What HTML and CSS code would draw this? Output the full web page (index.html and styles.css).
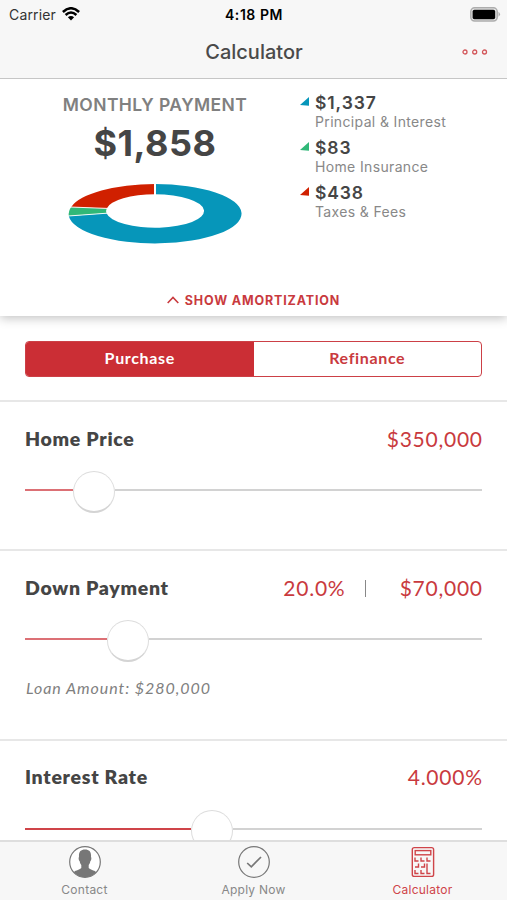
FILE: index.html
```html
<!DOCTYPE html>
<html lang="en">
<head>
<meta charset="utf-8">
<title>Calculator</title>
<link rel="stylesheet" href="styles.css">
</head>
<body>
<div class="app">
  <header class="top">
    <div class="status">
      <div class="carrier"><span>Carrier</span>
        <svg width="18" height="14" viewBox="0 0 18 14" fill="none" stroke="#000" stroke-width="2.5"><path d="M.9 5Q9-2.5 17.1 5"/><path d="M3.6 8Q9 3 14.4 8"/><path d="M9 13.4L5.9 10.3Q9 7.8 12.1 10.3Z" fill="#000" stroke="none"/></svg>
      </div>
      <div class="clock">4:18 PM</div>
      <svg class="battery" width="31" height="15" viewBox="0 0 31 15"><rect x=".8" y=".8" width="26.4" height="13.2" rx="3.8" fill="#e5e5e5" stroke="#adadad" stroke-width="1.5"/><rect x="2.6" y="2.7" width="22.6" height="9.5" rx="1.8" fill="#000"/><path d="M28.5 4.8Q31.5 7.3 28.5 9.8Z" fill="#adadad"/></svg>
    </div>
    <div class="nav">
      <h1>Calculator</h1>
      <svg class="more" width="26" height="6" viewBox="0 0 26 6" fill="none" stroke="#d3575b" stroke-width="1.3"><circle cx="3" cy="3" r="2"/><circle cx="12.7" cy="3" r="2"/><circle cx="22.5" cy="3" r="2"/></svg>
    </div>
  </header>

  <section class="summary">
    <div class="overview">
      <div class="payment">
        <div class="caption">MONTHLY PAYMENT</div>
        <div class="total">$1,858</div>
        <svg class="donut" width="174" height="60" viewBox="68 184 174 60">
          <path fill="#0696ba" d="M155 184A86.5 29.7 0 1 1 68.8 216L106.5 213.3A49 16.7 0 1 0 155 194.3Z"/>
          <path fill="#30b878" d="M68.8 216Q68.2 211 71.2 207L106.7 208.4Q105.5 211 106.5 213.3Z"/>
          <path fill="#d02000" d="M71.2 207A86.5 29.7 0 0 1 155 184V194.3A49 16.7 0 0 0 106.7 208.4Z"/>
          <path stroke="#fff" stroke-width="2" d="M155 183V196"/>
          <path stroke="#fff" stroke-width=".9" d="M67 216.1L107 213.2M67 206.9L107 208.4"/>
        </svg>
      </div>
      <ul class="legend">
        <li><svg width="9" height="9" viewBox="0 0 9 9"><path fill="#0696ba" d="M0 8L9 0V8.7Z"/></svg><div><b>$1,337</b><span>Principal &amp; Interest</span></div></li>
        <li><svg width="9" height="9" viewBox="0 0 9 9"><path fill="#30b878" d="M0 8L9 0V8.7Z"/></svg><div><b>$83</b><span>Home Insurance</span></div></li>
        <li><svg width="9" height="9" viewBox="0 0 9 9"><path fill="#d02000" d="M0 8L9 0V8.7Z"/></svg><div><b>$438</b><span>Taxes &amp; Fees</span></div></li>
      </ul>
    </div>
    <div class="amort"><svg width="12" height="8" viewBox="0 0 12 8" fill="none" stroke="#c93a3e" stroke-width="1.6"><path d="M.7 7L6 1.5L11.3 7"/></svg><span>SHOW AMORTIZATION</span></div>
  </section>

  <main class="form">
    <div class="segment"><div class="seg on">Purchase</div><div class="seg">Refinance</div></div>

    <section class="field price">
      <div class="row"><h2>Home Price</h2><div class="value">$350,000</div></div>
      <div class="slider"><div class="fill"></div><div class="knob"></div><div class="rest"></div></div>
    </section>

    <section class="field down">
      <div class="row"><h2>Down Payment</h2><div class="values"><div class="value">20.0%</div><i class="bar"></i><div class="value">$70,000</div></div></div>
      <div class="slider"><div class="fill"></div><div class="knob"></div><div class="rest"></div></div>
      <p class="note">Loan Amount: $280,000</p>
    </section>

    <section class="field rate">
      <div class="row"><h2>Interest Rate</h2><div class="value">4.000%</div></div>
      <div class="slider"><div class="fill"></div><div class="knob"></div><div class="rest"></div></div>
    </section>
  </main>

  <nav class="tabs">
    <div class="tab">
      <svg width="34" height="34" viewBox="0 0 34 34"><circle cx="17" cy="17" r="15.3" fill="#fff" stroke="#777" stroke-width="1.2"/><path fill="#777" d="M17 4.500C12.500 4.500 10.600 7 11 12C10.300 12.500 10.700 15.700 11.700 16.200C12 18 12.600 19 13.300 20V23C12 24.800 8 25 5.600 27.200A15.300 15.300 0 0 0 28.400 27.200C26 25 22 24.800 20.700 23V20C21.400 19 22 18 22.300 16.200C23.300 15.700 23.700 12.500 23 12C23.400 7 21.500 4.500 17 4.500Z"/></svg>
      <span>Contact</span>
    </div>
    <div class="tab">
      <svg width="34" height="34" viewBox="0 0 34 34" fill="none" stroke="#777"><circle cx="17" cy="17" r="15.300" stroke-width="1.200"/><path stroke-width="1.700" d="M10.200 18L14.300 21.800L24 12"/></svg>
      <span>Apply Now</span>
    </div>
    <div class="tab active">
      <svg width="34" height="34" viewBox="0 0 34 34" fill="none" stroke="#cf4449" stroke-width="1.400"><rect x="6.300" y="2.600" width="21.300" height="28.800" rx="2"/><rect x="9.200" y="5.600" width="15.600" height="4.200"/><path d="M9 12.500V16H12.500M15 12.500V16H18.500M21 12.500V16H24.500M9 22H12.500V18.500M15 22H18.500V18.500M9 25V28.500H12.500M15 25V28.500H18.500M21 18.500V28.500H24.500"/></svg>
      <span>Calculator</span>
    </div>
  </nav>
</div>
</body>
</html>
```

FILE: styles.css
```css
* { box-sizing: border-box; }
body, h1, h2, ul, p { margin: 0; padding: 0; }
body { font-family: Inter, "Liberation Sans", sans-serif; background: #fff; color: #454545; }
svg { display: block; flex: none; }
.app { width: 507px; height: 900px; overflow: hidden; display: flex; flex-direction: column; }

.top { height: 79px; flex: none; position: relative; z-index: 2; background: #f7f7f7; border-bottom: 1px solid #c6c6c6; }
.status { height: 28px; display: grid; grid-template-columns: 1fr auto 1fr; align-items: center; padding: 0 6px 0 9px; }
.carrier { display: flex; align-items: center; gap: 6px; font-size: 14px; letter-spacing: .15px; color: #333; }
.clock { font-size: 14px; font-weight: 600; letter-spacing: .55px; margin-left: -2px; color: #000; }
.battery { justify-self: end; }
.nav { height: 48px; display: grid; grid-template-columns: 1fr auto 1fr; align-items: center; padding-right: 19px; padding-left: 20px; }
.nav h1 { grid-column: 2; font-size: 20px; font-weight: 500; line-height: 26px; color: #4a4a4a; }
.more { justify-self: end; }

.summary { height: 237px; flex: none; position: relative; z-index: 1; background: #fff; box-shadow: 0 2px 10px rgba(0,0,0,.25); display: flex; flex-direction: column; justify-content: space-between; }
.overview { display: flex; }
.payment { width: 300px; padding: 15px 0 0 10px; display: flex; flex-direction: column; align-items: center; }
.caption { font-size: 17.500px; line-height: 22px; font-weight: 600; letter-spacing: .4px; color: #808080; }
.total { font-size: 36px; line-height: 44px; margin-top: 5px; font-weight: 700; letter-spacing: .5px; }
.donut { margin-top: 19px; }
.legend { list-style: none; padding-top: 14px; }
.legend li { height: 45px; display: flex; gap: 6px; }
.legend li svg { margin-top: 4px; }
.legend b { display: block; font-size: 17.500px; line-height: 20px; font-weight: 600; letter-spacing: .9px; }
.legend span { display: block; font-size: 14px; line-height: 18px; letter-spacing: .35px; color: #888; }
.amort { height: 32px; display: flex; justify-content: center; align-items: center; gap: 6px; font-size: 12.500px; font-weight: 700; letter-spacing: .85px; color: #c93a3e; }

.form { flex: 1; min-height: 0; overflow: hidden; font-family: Lato, "Open Sans", sans-serif; }
.segment { margin: 25px 25px 23px; height: 36px; display: flex; border: 1px solid #cc4046; border-radius: 4px; overflow: hidden; }
.seg { flex: 1; display: flex; align-items: center; justify-content: center; padding-bottom: 3px; font-size: 16px; font-weight: 700; letter-spacing: .65px; color: #c93a3e; }
.seg.on { background: #cb2e35; color: #fff; }
.field { border-top: 2px solid #e7e7e7; padding: 23px 25px 0; }
.price { height: 149px; }
.down { height: 190px; }
.row { display: flex; justify-content: space-between; align-items: center; height: 28px; }
.row h2 { font-size: 19.500px; line-height: 28px; font-weight: 800; letter-spacing: .7px; color: #454545; }
.value { font-size: 21px; line-height: 28px; letter-spacing: .75px; margin-right: -.75px; color: #c93a3e; }
.values { display: flex; align-items: center; }
.bar { width: 1px; height: 17px; background: #888; margin: 0 34px 0 20px; }
.slider { display: flex; align-items: center; height: 42px; margin-top: 18px; }
.fill { height: 2px; background: #dc7075; margin-bottom: 4px; }
.rest { flex: 1; height: 2px; background: #d2d2d2; margin-bottom: 4px; }
.knob { width: 42px; height: 42px; flex: none; border: 1px solid #ddd; border-bottom: 2px solid #d4d4d4; border-radius: 50%; background: #fff; }
.price .fill { width: 48px; }
.down .fill { width: 82px; }
.rate { padding-top: 22px; }
.rate .slider { margin-top: 19px; }
.rate .fill { width: 166px; background: #cf4449; }
.note { margin-top: 16px; padding-left: 1px; font-size: 16px; line-height: 20px; letter-spacing: .95px; font-style: italic; color: #808080; }

.tabs { height: 60px; flex: none; position: relative; border-top: 2px solid #dedede; background: #f7f7f7; display: grid; grid-template-columns: repeat(3, 1fr); }
.tab { display: flex; flex-direction: column; align-items: center; padding-top: 3px; font-size: 12px; line-height: 16px; letter-spacing: .25px; color: #888; }
.tab span { margin-top: 3px; }
.active { color: #cf4449; }
```
